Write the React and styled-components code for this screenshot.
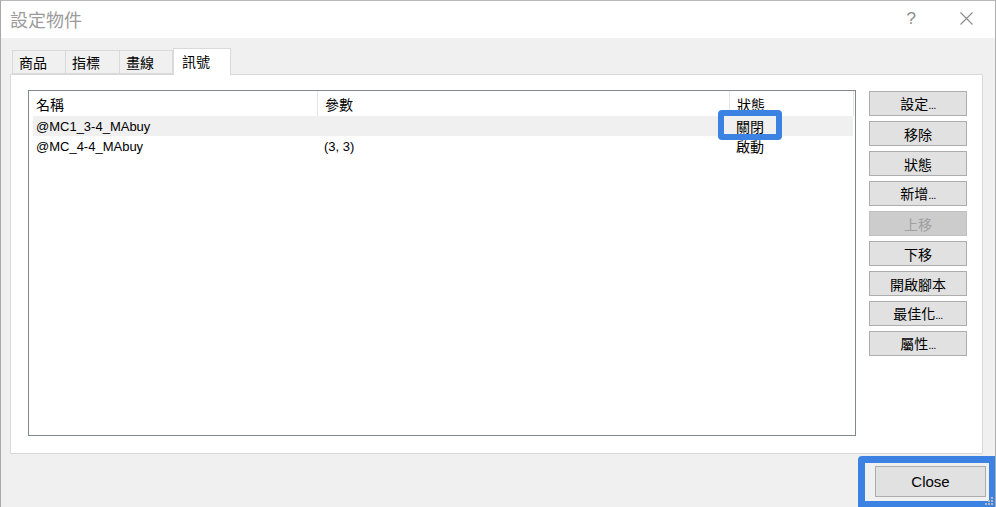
import styled, { createGlobalStyle } from 'styled-components';

const GlobalStyle = createGlobalStyle`
  html, body {
    margin: 0;
    padding: 0;
    background: #f0f0f0;
  }
  * {
    box-sizing: border-box;
  }
`;

const cjk = `"Noto Sans CJK TC", "Noto Sans CJK SC", sans-serif`;
const latin = `"Liberation Sans", "Noto Sans CJK TC", sans-serif`;

const Window = styled.div`
  position: relative;
  width: 996px;
  height: 507px;
  display: flex;
  flex-direction: column;
  background: #f0f0f0;
  border-top: 1px solid #b9b9b9;
  border-left: 1px solid #a8a8a8;
  border-right: 1px solid #b0b0b0;
  overflow: hidden;
`;

const TitleBar = styled.div`
  height: 37px;
  flex: none;
  display: flex;
  align-items: center;
  background: #ffffff;
  padding-left: 9px;
`;

const Title = styled.div`
  flex: 1;
  font-family: ${cjk};
  font-size: 18px;
  color: #9b9b9b;
  line-height: 1;
  margin-top: -2px;
`;

const Help = styled.div`
  font-family: ${latin};
  font-size: 17px;
  color: #8c8c8c;
  margin-right: 44px;
  margin-top: -2px;
`;

const CloseX = styled.svg`
  width: 13px;
  height: 13px;
  margin-right: 22px;
  margin-top: -2px;
`;

const Body = styled.div`
  flex: 1;
  display: flex;
  flex-direction: column;
  padding: 10px 12px 0 9px;
`;

const TabStrip = styled.div`
  display: flex;
  align-items: flex-end;
  height: 26px;
  padding-left: 2px;
`;

const Tab = styled.div`
  position: relative;
  display: flex;
  align-items: center;
  height: ${p => (p.$active ? '27px' : '24px')};
  padding: ${p => (p.$active ? '0 8px 3px 8px' : '0 6px')};
  margin-bottom: ${p => (p.$active ? '-1px' : '0')};
  width: ${p => p.$w}px;
  background: ${p => (p.$active ? '#ffffff' : '#f0f0f0')};
  border: 1px solid #d9d9d9;
  border-bottom: ${p => (p.$active ? 'none' : '1px solid #d9d9d9')};
  border-left: ${p => (p.$first || p.$active ? '1px solid #d9d9d9' : 'none')};
  font-family: ${cjk};
  font-size: 14px;
  color: #000;
  z-index: ${p => (p.$active ? 1 : 0)};
`;

const Panel = styled.div`
  height: 380px;
  display: flex;
  gap: 13px;
  align-items: flex-start;
  background: #ffffff;
  border: 1px solid #d9d9d9;
  padding: 15px 0 0 17px;
`;

const ListView = styled.div`
  position: relative;
  width: 828px;
  height: 346px;
  border: 1px solid #828790;
  background: #ffffff;
`;

const HeaderRow = styled.div`
  display: flex;
  height: 25px;
  background: #ffffff;
`;

const HeaderCell = styled.div`
  width: ${p => p.$w}px;
  flex: none;
  display: flex;
  align-items: center;
  padding-left: 7px;
  border-right: 1px solid #e5e5e5;
  font-family: ${cjk};
  font-size: 14px;
  color: #000;
`;

const Row = styled.div`
  display: flex;
  height: 20px;
  margin-left: 4px;
  width: 820px;
  background: ${p => (p.$shaded ? '#f0f0f0' : '#ffffff')};
`;

const Cell = styled.div`
  width: ${p => p.$w}px;
  flex: none;
  display: flex;
  align-items: center;
  padding-left: ${p => p.$pad}px;
  font-family: ${p => (p.$cjk ? cjk : latin)};
  font-size: ${p => (p.$cjk ? '14px' : '13px')};
  color: #000;
  white-space: nowrap;
`;

const Highlight = styled.div`
  position: absolute;
  left: 689px;
  top: 19px;
  width: 64px;
  height: 30px;
  border: 6px solid #3b82e2;
  border-radius: 4px;
  pointer-events: none;
`;

const ButtonColumn = styled.div`
  display: flex;
  flex-direction: column;
  gap: 5px;
  margin-top: 1px;
`;

const SideButton = styled.button`
  width: 98px;
  height: 25px;
  padding: 0;
  background: ${p => (p.disabled ? '#cccccc' : '#e1e1e1')};
  border: 1px solid ${p => (p.disabled ? '#bfbfbf' : '#adadad')};
  font-family: ${cjk};
  font-size: 14px;
  line-height: 1;
  color: ${p => (p.disabled ? '#a0a0a0' : '#000000')};
`;

const Dots = styled.span`
  font-family: ${latin};
  font-size: 11px;
  letter-spacing: -0.5px;
`;

const Footer = styled.div`
  flex: 1;
  display: flex;
  justify-content: flex-end;
  align-items: flex-start;
  padding-top: 12px;
  margin-right: -3px;
`;

const CloseButton = styled.button`
  width: 111px;
  height: 31px;
  background: #e1e1e1;
  border: 1px solid #adadad;
  font-family: ${latin};
  font-size: 15px;
  color: #000;
`;

const CloseHighlight = styled.div`
  position: absolute;
  right: -1px;
  bottom: -1px;
  width: 138px;
  height: 52px;
  border: 7px solid #3b82e2;
  border-radius: 4px 0 0 0;
  pointer-events: none;
`;

const Grip = styled.svg`
  position: absolute;
  right: 2px;
  bottom: 2px;
  width: 8px;
  height: 8px;
`;

const tabs = [
  { label: '商品', w: 54 },
  { label: '指標', w: 54 },
  { label: '畫線', w: 53 },
  { label: '訊號', w: 58, active: true },
];

const columns = [
  { label: '名稱', w: 289 },
  { label: '參數', w: 412 },
  { label: '狀態', w: 124 },
];

const rows = [
  { name: '@MC1_3-4_MAbuy', params: '', status: '關閉' },
  { name: '@MC_4-4_MAbuy', params: '(3, 3)', status: '啟動' },
];

const buttons = [
  { label: '設定', dots: true },
  { label: '移除' },
  { label: '狀態' },
  { label: '新增', dots: true },
  { label: '上移', disabled: true },
  { label: '下移' },
  { label: '開啟腳本' },
  { label: '最佳化', dots: true },
  { label: '屬性', dots: true },
];

export default function App() {
  return (
    <>
      <GlobalStyle />
      <Window>
        <TitleBar>
          <Title>設定物件</Title>
          <Help>?</Help>
          <CloseX viewBox="0 0 13 13">
            <path d="M0.5 0.5 L12.5 12.5 M12.5 0.5 L0.5 12.5" stroke="#8a8a8a" strokeWidth="1.1" fill="none" />
          </CloseX>
        </TitleBar>
        <Body>
          <TabStrip>
            {tabs.map((t, i) => (
              <Tab key={t.label} $w={t.w} $active={t.active} $first={i === 0}>
                {t.label}
              </Tab>
            ))}
          </TabStrip>
          <Panel>
            <ListView>
              <HeaderRow>
                {columns.map(c => (
                  <HeaderCell key={c.label} $w={c.w}>{c.label}</HeaderCell>
                ))}
              </HeaderRow>
              {rows.map((r, i) => (
                <Row key={r.name} $shaded={i === 0}>
                  <Cell $w={285} $pad={3}>{r.name}</Cell>
                  <Cell $w={412} $pad={6}>{r.params}</Cell>
                  <Cell $w={120} $pad={6} $cjk>{r.status}</Cell>
                </Row>
              ))}
              <Highlight />
            </ListView>
            <ButtonColumn>
              {buttons.map(b => (
                <SideButton key={b.label} disabled={b.disabled}>
                  {b.label}
                  {b.dots && <Dots>...</Dots>}
                </SideButton>
              ))}
            </ButtonColumn>
          </Panel>
          <Footer>
            <CloseButton>Close</CloseButton>
          </Footer>
        </Body>
        <CloseHighlight />
        <Grip viewBox="0 0 8 8">
          <rect x="6" y="0" width="2" height="2" fill="#b8b8b8" />
          <rect x="3" y="3" width="2" height="2" fill="#b8b8b8" />
          <rect x="6" y="3" width="2" height="2" fill="#b8b8b8" />
          <rect x="0" y="6" width="2" height="2" fill="#b8b8b8" />
          <rect x="3" y="6" width="2" height="2" fill="#b8b8b8" />
          <rect x="6" y="6" width="2" height="2" fill="#b8b8b8" />
        </Grip>
      </Window>
    </>
  );
}
